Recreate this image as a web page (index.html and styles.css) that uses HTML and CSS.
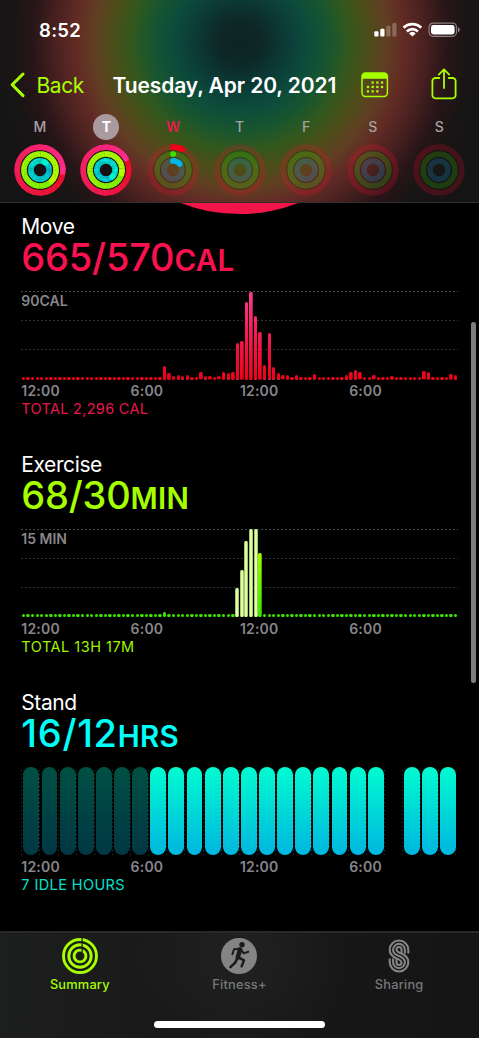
FILE: index.html
```
<!DOCTYPE html>
<html lang="en">
<head>
    <meta charset="UTF-8">
    <meta name="viewport" content="width=device-width, initial-scale=1.0">
    <title>Activity</title>
    <link rel="stylesheet" href="styles.css">
</head>
<body>
<div class="phone">
    <header class="header">
        <div class="status">
            <span class="time">8:52</span>
            <svg class="status-icons" width="88" height="18" viewBox="0 0 88 18">
                <g fill="#fff">
                    <rect x="0.3" y="10.2" width="4.2" height="5.4" rx="1"/>
                    <rect x="6.3" y="7.8" width="4.2" height="7.8" rx="1"/>
                    <g opacity=".25">
                        <rect x="12.3" y="4.8" width="4.2" height="10.8" rx="1"/>
                        <rect x="18.3" y="2" width="4.2" height="13.6" rx="1"/>
                    </g>
                </g>
                <g fill="none" stroke="#fff" stroke-width="2.7">
                    <path d="M29.6 6.8a12.6 12.6 0 0 1 17.6 0"/>
                    <path d="M32.9 10.4a8 8 0 0 1 11 0"/>
                </g>
                <path d="M38.4 15.6l-3.3-3.2a4.8 4.8 0 0 1 6.6 0z" fill="#fff"/>
                <rect x="55.1" y="2.1" width="27.4" height="13.2" rx="4" fill="none" stroke="#fff" stroke-opacity=".45" stroke-width="1.2"/>
                <rect x="57" y="4" width="23.6" height="9.4" rx="2.4" fill="#fff"/>
                <path d="M84 6.2c2.4 1 2.4 4 0 5z" fill="#fff" opacity=".5"/>
            </svg>
        </div>

        <div class="nav">
            <svg class="chevron" width="16" height="26" viewBox="0 0 16 26">
                <path d="M14 2L3.2 12.8l10.8 10.8" fill="none" stroke="#a6ff00" stroke-width="3" stroke-linecap="round" stroke-linejoin="round"/>
            </svg>
            <span class="back">Back</span>
            <span class="date">Tuesday, Apr 20, 2021</span>
            <svg class="calendar" width="28" height="26" viewBox="0 0 28 26">
                <rect x="1" y="1" width="25.4" height="23.4" rx="3.4" fill="none" stroke="#a6ff00" stroke-width="1.5"/>
                <path d="M1 6.8V4a3 3 0 0 1 3-3h19.4a3 3 0 0 1 3 3v2.8z" fill="#a6ff00"/>
                <g fill="#a6ff00">
                    <rect x="10.5" y="9.4" width="2.3" height="2.3"/><rect x="15.2" y="9.4" width="2.3" height="2.3"/><rect x="19.9" y="9.4" width="2.3" height="2.3"/>
                    <rect x="5.8" y="13.8" width="2.3" height="2.3"/><rect x="10.5" y="13.8" width="2.3" height="2.3"/><rect x="15.2" y="13.8" width="2.3" height="2.3"/><rect x="19.9" y="13.8" width="2.3" height="2.3"/>
                    <rect x="5.8" y="18.2" width="2.3" height="2.3"/><rect x="10.5" y="18.2" width="2.3" height="2.3"/><rect x="15.2" y="18.2" width="2.3" height="2.3"/>
                </g>
            </svg>
            <svg class="share" width="26" height="32" viewBox="0 0 26 32">
                <g fill="none" stroke="#a6ff00" stroke-width="1.8" stroke-linecap="round" stroke-linejoin="round">
                    <path d="M8.3 10H4.4a3 3 0 0 0-3 3v14.3a3 3 0 0 0 3 3h17.2a3 3 0 0 0 3-3V13a3 3 0 0 0-3-3h-3.9"/>
                    <path d="M13 20V1.6M7.8 6.6L13 1.4l5.2 5.2"/>
                </g>
            </svg>
        </div>

        <div class="week" id="week"></div>
    </header>

    <main class="content">
        <div class="big-ring"></div>

        <section class="metric move">
            <h2>Move</h2>
            <p class="value">665/570<span class="unit">CAL</span></p>
            <div class="chart lines">
                <span class="scale">90CAL</span>
                <div class="bars" id="moveBars"></div>
            </div>
            <div class="axis"><span>12:00</span><span>6:00</span><span>12:00</span><span>6:00</span></div>
            <p class="total">TOTAL 2,296 CAL</p>
        </section>

        <section class="metric exercise">
            <h2>Exercise</h2>
            <p class="value">68/30<span class="unit">MIN</span></p>
            <div class="chart lines">
                <span class="scale">15 MIN</span>
                <div class="bars" id="exerciseBars"></div>
            </div>
            <div class="axis"><span>12:00</span><span>6:00</span><span>12:00</span><span>6:00</span></div>
            <p class="total">TOTAL 13H 17M</p>
        </section>

        <section class="metric stand">
            <h2>Stand</h2>
            <p class="value">16/12<span class="unit">HRS</span></p>
            <div class="chart hours" id="standHours"></div>
            <div class="axis"><span>12:00</span><span>6:00</span><span>12:00</span><span>6:00</span></div>
            <p class="total">7 IDLE HOURS</p>
        </section>

        <!-- tops of the next row, cut off by the tab bar -->
        <div class="peek"><i></i><i></i></div>

        <div class="scrollbar"></div>
    </main>

    <footer class="tabs">
        <div class="tab active">
            <svg width="38" height="38" viewBox="-19 -19 38 38">
                <g fill="none" stroke="#a6ff00" stroke-width="2.9">
                    <circle r="16.5"/><circle r="11.2"/><circle r="5.9"/>
                </g>
                <path d="M2.1 -18.5V-4" stroke="#1c1c1c" stroke-width="1.3"/>
            </svg>
            <span>Summary</span>
        </div>
        <div class="tab">
            <svg width="38" height="38" viewBox="-19 -19 38 38">
                <circle r="18" fill="#848484"/>
                <circle cx="3" cy="-11.2" r="2.7" fill="#1b1b1b"/>
                <g fill="none" stroke="#1b1b1b" stroke-linecap="round" stroke-linejoin="round">
                    <path d="M1 -6.5L-1.2 1.5" stroke-width="4.6"/>
                    <path d="M.5 -7.2L-5 -6.8L-6.6 -1.8" stroke-width="2"/>
                    <path d="M2.5 -6L4.6 -2.6L9.3 -4.2" stroke-width="2"/>
                    <path d="M-1.6 2L-3.8 6.6L-8.6 11.2" stroke-width="2.5"/>
                    <path d="M-.2 1.6L5 4.4L2.6 10.4" stroke-width="2.5"/>
                </g>
            </svg>
            <span>Fitness+</span>
        </div>
        <div class="tab">
            <svg width="38" height="38" viewBox="-19 -19 38 38">
                <g fill="none" stroke="#848484" stroke-width="2.1">
                    <path d="M9.3 -2.5V-6.2A9.3 9.3 0 0 0 -9.3 -6.2C-9.3 -1.5 -6.5 .8 -2.5 2.4C.8 3.7 2.5 4.5 2.5 6.5A2.5 2.5 0 0 1 -2.5 6.5V2.8"/>
                    <path d="M5.9 -2.5V-6.2A5.9 5.9 0 0 0 -5.9 -6.2C-5.9 -3 -3.5 -1.3 -1.2 -.5C3 1 5.9 2.8 5.9 6.2A5.9 5.9 0 0 1 -5.9 6.2V2.5"/>
                    <path d="M2.5 -2.8V-6.5A2.5 2.5 0 0 0 -2.5 -6.5C-2.5 -4.5 -.8 -3.7 2.5 -2.4C6.5 -.8 9.3 1.5 9.3 6.2A9.3 9.3 0 0 1 -9.3 6.2V2.5"/>
                </g>
            </svg>
            <span>Sharing</span>
        </div>
        <div class="home-indicator"></div>
    </footer>
</div>
<script src="script.js"></script>
</body>
</html>
```
FILE: styles.css
```
* { box-sizing: border-box; }
body { margin: 0; background: #fff; font-family: Inter, "Liberation Sans", sans-serif; }
h2, p { margin: 0; }
svg { display: block; flex: none; }

.phone { width: 479px; height: 1038px; background: #000; overflow: hidden; display: flex; flex-direction: column; }

/* header */
.header {
    height: 203px;
    flex: none;
    border-bottom: 1.5px solid #343031;
    background: radial-gradient(circle at 240px 42px, #0e2323 0, #0d2827 22px, #0b3d38 48px, #0d4c3b 68px, #175530 88px, #31581d 108px, #4b4e18 127px, #603f22 146px, #622b25 164px, #47201f 186px, #271518 208px, #181515 230px, #141414 260px);
}
.status { height: 60px; display: flex; justify-content: space-between; align-items: center; padding: 0 16px 0 39px; }
.time { color: #fff; font-size: 18.5px; font-weight: 600; letter-spacing: .3px; }
.status-icons { margin-right: 1px; }
.nav { height: 50px; display: flex; align-items: center; }
.chevron { margin-left: 9px; }
.back { width: 76px; margin-left: 11.5px; color: #a6ff00; font-size: 21px; letter-spacing: -.4px; }
.date { width: 248px; color: #fff; font-size: 21px; font-weight: 600; letter-spacing: -.1px; white-space: nowrap; }
.share { margin-left: 42px; margin-bottom: 2px; }

.week { display: grid; grid-template-columns: repeat(7, 66.6px); padding-left: 6.5px; }
.day { display: flex; flex-direction: column; align-items: center; }
.day-name { width: 26px; height: 26px; margin: 4px 0; border-radius: 50%; line-height: 26px; text-align: center; font-size: 14px; font-weight: 500; color: #a5a2a3; }
.day-name.selected { background: #a99aa0; color: #fff; font-weight: 700; }
.day-name.today { color: #fa114f; }

/* metrics */
.content { position: relative; flex: 1; overflow: hidden; padding: 11.2px 0 0 21.3px; }
.big-ring { position: absolute; left: 77px; top: -314px; width: 325px; height: 325px; border-radius: 50%; background: #f3154a; }
.metric { width: 436.7px; height: 237.7px; }
.metric h2 { height: 25px; line-height: 25px; font-size: 21px; font-weight: 400; color: #fff; letter-spacing: -.4px; }
.value { height: 37.6px; line-height: 37.6px; font-size: 38px; font-weight: 500; letter-spacing: -.2px; white-space: nowrap; }
.unit { font-size: 29.5px; font-weight: 600; letter-spacing: .3px; }
.move .value { color: #fa114f; }
.exercise .value { color: #a6ff00; }
.stand .value { color: #00fff6; letter-spacing: .7px; }

.chart { height: 88.4px; margin-top: 14.5px; }
.lines {
    display: flex;
    position: relative;
    background:
        repeating-linear-gradient(90deg, transparent 0 2px, #000 2px 4px),
        linear-gradient(#484848, #484848) 0 0 / 100% 1px no-repeat,
        linear-gradient(#303030, #303030) 0 29px / 100% 1px no-repeat,
        linear-gradient(#303030, #303030) 0 58px / 100% 1px no-repeat;
}
.scale { position: absolute; left: 0; top: 0; line-height: 20px; font-size: 14px; font-weight: 600; color: #87868b; }
.bars { flex: 1; display: grid; grid-template-columns: repeat(96, 1fr); align-items: end; justify-items: center; }
.bar { width: 3.4px; border-radius: 1.6px; background-size: 100% 88px; background-position: bottom; }
.move .bar { background-image: linear-gradient(#ff3a94, #f61d57 45%, #ef0016); }
.exercise .bar { background-image: linear-gradient(#c8ff00, #36e600); }
.exercise .bar.workout { background: linear-gradient(90deg, #7d9853, #ddff9f 30% 70%, #7d9853); width: 4px; }

.hours { display: grid; grid-template-columns: repeat(24, 18.13px); }
.hour { display: flex; justify-content: center; background: repeating-linear-gradient(#000 0 2.6px, #363636 2.6px 4px) 0 0 / 1px 100% no-repeat; }
.hour:last-child {
    background: repeating-linear-gradient(#000 0 2.6px, #363636 2.6px 4px) 0 0 / 1px 100% no-repeat,
        repeating-linear-gradient(#000 0 2.6px, #363636 2.6px 4px) 100% 0 / 1px 100% no-repeat;
}
.hour i { width: 15.8px; margin-left: 2px; border-radius: 8px; background: linear-gradient(#00fcd0, #00b6df); }
.hour i.idle { background: linear-gradient(#005043, #003744); }

.axis { display: grid; grid-template-columns: repeat(4, 109.3px); height: 20px; margin-top: 1.8px; line-height: 20px; font-size: 14px; font-weight: 600; color: #87868b; letter-spacing: .2px; }
.total { height: 15px; line-height: 15px; font-size: 14.5px; letter-spacing: .3px; }
.move .total { color: #e8174c; }
.exercise .total { color: #a0f500; letter-spacing: .5px; }
.stand .total { color: #00e0cc; letter-spacing: .4px; }

.peek { display: flex; gap: 190px; padding: 3.5px 0 0 3.5px; }
.peek i { width: 3px; height: 1px; background: #999; }
.scrollbar { position: absolute; left: 471px; top: 119px; width: 4.6px; height: 361px; border-radius: 2.3px; background: #7d7d7d; }

/* tab bar */
.tabs {
    height: 107px;
    flex: none;
    border-top: 2px solid #292929;
    display: grid;
    grid-template-columns: repeat(3, 1fr);
    grid-template-rows: 88px 8px;
    background: radial-gradient(circle at 240px 20px, #202121, transparent 110px), linear-gradient(90deg, #1d1e1e, #191919 35%, #151515);
}
.tab { display: flex; flex-direction: column; align-items: center; padding-top: 4px; color: #77777a; font-size: 12.8px; font-weight: 500; letter-spacing: .2px; }
.tab span { line-height: 20px; }
.tab.active { color: #a6ff00; }
.home-indicator { grid-column: 1 / 4; justify-self: center; width: 171px; height: 7px; border-radius: 4px; background: #fff; }
```
FILE: script.js
```
// quarter-hour samples, bar heights in px
const move = new Array(96).fill(3);
const moveSamples = {
    31: 13.7, 32: 7, 33: 4, 34: 5, 35: 3.3, 36: 4.7, 39: 7.3, 40: 3.5, 41: 3.5, 43: 3.3, 44: 8, 45: 6.5, 46: 8,
    47: 36.3, 48: 38.7, 49: 77.7, 50: 88, 51: 63.3, 52: 47.7, 53: 14.3, 54: 46.3, 55: 12.3, 56: 6.3, 57: 4.3, 58: 5,
    60: 4.7, 64: 5.7, 71: 4.3, 72: 8, 73: 9.7, 74: 7.3, 77: 4.3, 81: 3.7, 88: 8.3, 89: 8, 94: 5.7, 95: 4.7
};
Object.keys(moveSamples).forEach(i => move[i] = moveSamples[i]);

const exercise = new Array(96).fill(3);
const exerciseSamples = { 31: 5.5, 47: 29, 48: 47.3, 49: 76, 50: 88, 51: 88, 52: 64.7 };
Object.keys(exerciseSamples).forEach(i => exercise[i] = exerciseSamples[i]);

function drawBars(id, values, isWorkout) {
    document.getElementById(id).innerHTML = values.map((v, i) =>
        `<div class="bar${isWorkout(i) ? ' workout' : ''}" style="height:${v}px"></div>`
    ).join('');
}
drawBars('moveBars', move, () => false);
drawBars('exerciseBars', exercise, i => i >= 47 && i <= 51);

// i = idle, s = stood, - = no data
document.getElementById('standHours').innerHTML = 'iiiiiiisssssssssssss-sss'.split('').map(h =>
    `<div class="hour">${h === '-' ? '' : `<i class="${h === 'i' ? 'idle' : 'stood'}"></i>`}</div>`
).join('');

const radii = [22.8, 16, 9.1];
const tracks = ['#ff0a2c', '#3be000', '#12b0f0'];

function point(r, deg) {
    const a = (deg - 90) * Math.PI / 180;
    return (r * Math.cos(a)).toFixed(2) + ' ' + (r * Math.sin(a)).toFixed(2);
}

// arc made of short pieces so the colour can run along it
function arc(r, start, end, from, to) {
    const steps = Math.max(1, Math.round((end - start) / 6));
    const size = (end - start) / steps;
    let out = '';
    for (let i = 0; i < steps; i++) {
        const c = from.map((v, k) => Math.round(v + (to[k] - v) * i / steps));
        const a = start + i * size;
        const round = i === steps - 1 || (i === 0 && end - start < 300);
        out += `<path d="M${point(r, a)}A${r} ${r} 0 0 1 ${point(r, a + size + (round ? 0 : 1))}" stroke="rgb(${c})" ${round ? 'stroke-linecap="round"' : ''}/>`;
    }
    return out;
}

const full = [
    [[232, 14, 38], [255, 44, 140]],
    [[128, 245, 0], [184, 255, 0]],
    [[0, 200, 225], [0, 245, 212]]
];
const days = [
    { name: 'M', ends: [95, 133, 38] },
    { name: 'T', ends: [60, 102, 138], cls: 'selected' },
    { name: 'W', cls: 'today', partial: [25, 1, 48] },
    { name: 'T' }, { name: 'F' }, { name: 'S' }, { name: 'S' }
];
const partialColors = [[240, 0, 24], [60, 225, 0], [0, 185, 230]];

document.getElementById('week').innerHTML = days.map(d => {
    let rings = '';
    if (d.ends) {
        rings += '<circle r="25.7" fill="#141214" stroke="none"/>';
        radii.forEach((r, i) => rings += arc(r, d.ends[i] - 360, d.ends[i], full[i][0], full[i][1]));
    } else {
        radii.forEach((r, i) => rings += `<circle r="${r}" stroke="${tracks[i]}" opacity=".2"/>`);
        [19.3, 12.5].forEach(r => rings += `<circle r="${r}" stroke="#141414" stroke-width="1" opacity=".3"/>`);
        if (d.partial) {
            radii.forEach((r, i) => rings += arc(r, 0, d.partial[i], partialColors[i], partialColors[i]));
        }
    }
    return `<div class="day"><span class="day-name ${d.cls || ''}">${d.name}</span>
        <svg width="52" height="52" viewBox="-26 -26 52 52" fill="none" stroke-width="5.7">${rings}</svg></div>`;
}).join('');
```
